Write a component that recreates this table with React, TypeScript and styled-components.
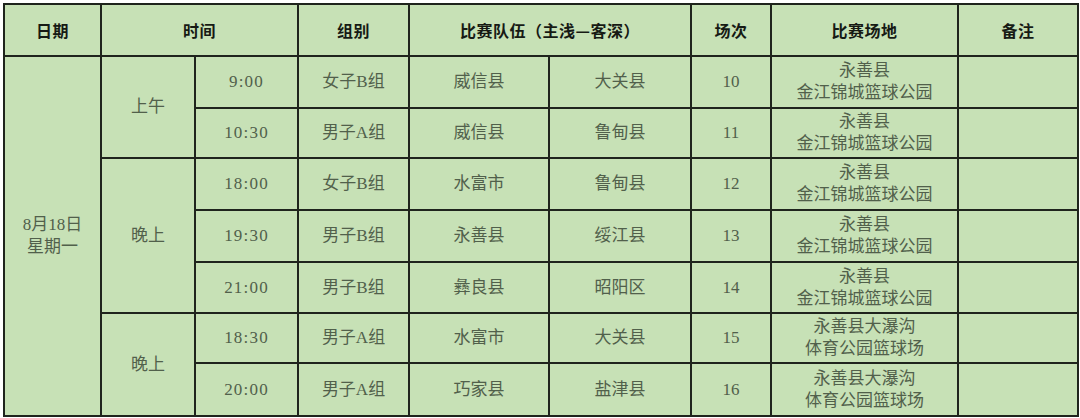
import React from "react"
import styled, { createGlobalStyle } from "styled-components"

const GlobalStyle = createGlobalStyle`
    html, body {
        margin: 0;
        padding: 0;
        background: #ffffff;
    }
`

const Page = styled.div`
    padding: 3px 0 0 3px;
`

const Table = styled.table`
    width: 1074px;
    table-layout: fixed;
    border-collapse: collapse;
    background: #c7e1b6;
`

const Th = styled.th`
    border: 2px solid #1f241d;
    font-family: "Noto Sans CJK SC", sans-serif;
    font-weight: 700;
    font-size: 16px;
    color: #161a14;
    text-align: center;
    vertical-align: middle;
    padding: 0;
    letter-spacing: 0.5px;
`

const Td = styled.td`
    border: 2px solid #1f241d;
    font-family: "Liberation Serif", "Noto Sans CJK SC", serif;
    font-size: 17px;
    line-height: 22px;
    color: #51604b;
    text-align: center;
    vertical-align: middle;
    padding: 0;
`

const Time = styled.span`
    letter-spacing: 1.2px;
`

const Row = styled.tr<{ $h: number }>`
    height: ${(p) => p.$h}px;
`

const widths = [97, 94, 103, 111, 140, 142, 80, 187, 120]

interface Match {
    time: string
    group: string
    home: string
    away: string
    no: string
    venue: string[]
    h: number
}

const matches: Match[] = [
    { time: "9:00", group: "女子B组", home: "威信县", away: "大关县", no: "10", venue: ["永善县", "金江锦城篮球公园"], h: 52 },
    { time: "10:30", group: "男子A组", home: "威信县", away: "鲁甸县", no: "11", venue: ["永善县", "金江锦城篮球公园"], h: 50 },
    { time: "18:00", group: "女子B组", home: "水富市", away: "鲁甸县", no: "12", venue: ["永善县", "金江锦城篮球公园"], h: 52 },
    { time: "19:30", group: "男子B组", home: "永善县", away: "绥江县", no: "13", venue: ["永善县", "金江锦城篮球公园"], h: 52 },
    { time: "21:00", group: "男子B组", home: "彝良县", away: "昭阳区", no: "14", venue: ["永善县", "金江锦城篮球公园"], h: 51 },
    { time: "18:30", group: "男子A组", home: "水富市", away: "大关县", no: "15", venue: ["永善县大瀑沟", "体育公园篮球场"], h: 50 },
    { time: "20:00", group: "男子A组", home: "巧家县", away: "盐津县", no: "16", venue: ["永善县大瀑沟", "体育公园篮球场"], h: 53 },
]

// where a 时段 cell starts and how many rows it covers
const periods: Record<number, { label: string; span: number }> = {
    0: { label: "上午", span: 2 },
    2: { label: "晚上", span: 3 },
    5: { label: "晚上", span: 2 },
}

const App = () => {
    return (
        <Page>
            <GlobalStyle />
            <Table>
                <colgroup>
                    {widths.map((w, i) => (
                        <col key={i} style={{ width: w }} />
                    ))}
                </colgroup>
                <thead>
                    <Row $h={52}>
                        <Th>日期</Th>
                        <Th colSpan={2}>时间</Th>
                        <Th>组别</Th>
                        <Th colSpan={2}>比赛队伍（主浅—客深）</Th>
                        <Th>场次</Th>
                        <Th>比赛场地</Th>
                        <Th>备注</Th>
                    </Row>
                </thead>
                <tbody>
                    {matches.map((m, i) => (
                        <Row key={i} $h={m.h}>
                            {i === 0 && (
                                <Td rowSpan={matches.length}>
                                    8月18日
                                    <br />
                                    星期一
                                </Td>
                            )}
                            {periods[i] && <Td rowSpan={periods[i].span}>{periods[i].label}</Td>}
                            <Td>
                                <Time>{m.time}</Time>
                            </Td>
                            <Td>{m.group}</Td>
                            <Td>{m.home}</Td>
                            <Td>{m.away}</Td>
                            <Td>{m.no}</Td>
                            <Td>
                                {m.venue[0]}
                                <br />
                                {m.venue[1]}
                            </Td>
                            <Td></Td>
                        </Row>
                    ))}
                </tbody>
            </Table>
        </Page>
    )
}

export default App
